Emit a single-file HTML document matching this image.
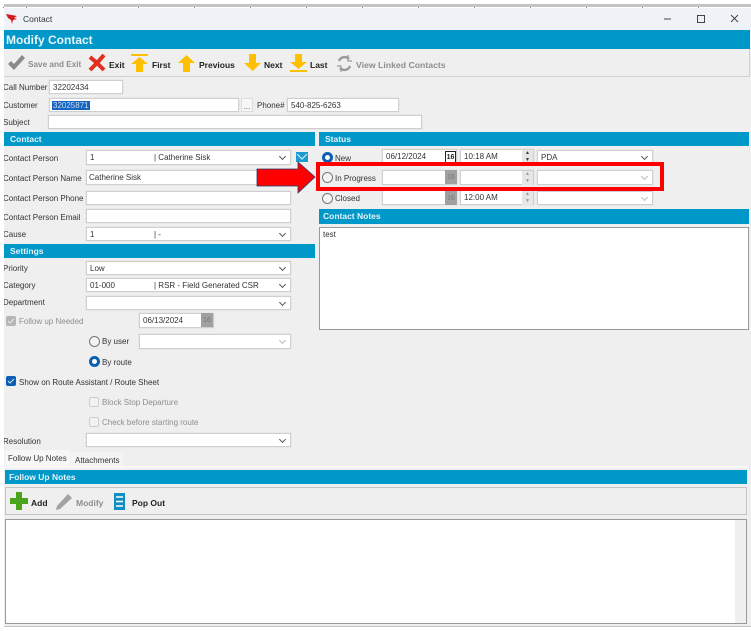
<!DOCTYPE html>
<html><head><meta charset="utf-8"><style>
html,body{margin:0;padding:0}
body{width:751px;height:631px;background:#fff;position:relative;overflow:hidden;font-family:"Liberation Sans",sans-serif;font-size:8px;color:#333}
#w{position:absolute;left:0;top:0;width:751px;height:631px;filter:blur(.35px)}
.a,.i,.s,.h,.t,.b{position:absolute}
.t{white-space:pre;line-height:12px;margin-top:1px}
.h{background:#0098c9;color:#e4f3f8;font-weight:bold;font-size:8.5px;line-height:14px;padding-left:6px;box-sizing:border-box}
.i,.s{background:#fff;border:1px solid #cfcfcf;box-shadow:0 0 0 .5px #e2e2e2;box-sizing:border-box;line-height:14px;padding-left:3px;white-space:pre;color:#333}
.s:after{content:"";position:absolute;right:5px;top:3px;width:4px;height:4px;border-right:1px solid #555;border-bottom:1px solid #555;transform:rotate(45deg)}
.s.d:after{border-color:#bbb}
.s span{position:absolute;left:67px;top:0}
.tb{font-weight:bold;font-size:8.5px;color:#222}
.g{color:#8e8e8e}
.r{position:absolute;width:11px;height:11px;border-radius:50%;box-sizing:border-box;border:1px solid #777;background:#f4f4f4}
.r.on{border:3px solid #0a5fb4;background:#fff}
.c{position:absolute;width:10px;height:10px;border-radius:2px;box-sizing:border-box}
.cal{position:absolute;width:12px;height:15px;background:#a0a0a0;color:#777;font-size:7px;text-align:center;line-height:15px}
.sp{position:absolute;width:11px;height:14px;background:#e6e6e6;color:#999;font-size:5px;line-height:7px;text-align:center}
</style></head><body>
<div id="w">
<div class="a" style="left:4px;top:4px;width:747px;height:3px;background:#c4c4c4"></div>
<div class="a" style="left:0;top:7px;width:751px;height:1px;background-image:repeating-linear-gradient(90deg,#888 0 1px,transparent 1px 56px);background-position:26px 0"></div>
<div class="a" style="left:4px;top:8px;width:747px;height:620px;background:#efefef"></div>
<div class="a" style="left:4px;top:8px;width:747px;height:22px;background:#eff3f8"></div>
<svg class="a" style="left:6px;top:14px" width="12" height="10" viewBox="0 0 12 10"><path d="M0 0L11 2L8 4L11 5L7 6L6 10L5 6L2 4Z" fill="#d21c1c"/></svg>
<div class="t" style="left:23px;top:12px;color:#333;font-size:8.5px">Contact</div>
<svg class="a" style="left:660px;top:12px" width="85" height="14" viewBox="0 0 85 14" fill="none" stroke="#444"><path d="M4 7H11"/><rect x="37.5" y="3.5" width="7" height="7"/><path d="M71 3L78 10M78 3L71 10"/></svg>
<div class="a" style="left:4px;top:30px;width:746px;height:19px;background:#0098c9;color:#e8f5fa;font-weight:bold;font-size:12px;line-height:20px;padding-left:2px;box-sizing:border-box">Modify Contact</div>
<div class="a" style="left:4px;top:49px;width:746px;height:28px;border-bottom:1px solid #d0d0d0;border-right:1px solid #d0d0d0;box-sizing:border-box"></div>
<svg class="a" style="left:7px;top:54px" width="19" height="18" viewBox="0 0 19 18"><path d="M1 10L4 7L7 10L15 1L18 4L7 16Z" fill="#8a8a8a"/></svg>
<div class="t tb g" style="left:28px;top:58px;font-size:8.2px">Save and Exit</div>
<svg class="a" style="left:88px;top:54px" width="18" height="18" viewBox="0 0 18 18"><path d="M2 3L9 9M16 1L9 9M9 9L2 16M9 9L16 16" stroke="#e1301f" stroke-width="4"/></svg>
<div class="t tb" style="left:109px;top:58px">Exit</div>
<svg class="a" style="left:131px;top:54px" width="17" height="18" viewBox="0 0 17 18" fill="#ffc000"><rect width="17" height="2"/><path d="M8.5 3L17 10H12V18H5V10H0Z"/></svg>
<div class="t tb" style="left:152px;top:58px">First</div>
<svg class="a" style="left:178px;top:55px" width="17" height="17" viewBox="0 0 17 17" fill="#ffc000"><path d="M8.5 0L17 8H12V17H5V8H0Z"/></svg>
<div class="t tb" style="left:199px;top:58px">Previous</div>
<svg class="a" style="left:244px;top:54px" width="17" height="17" viewBox="0 0 17 17" fill="#ffc000"><path d="M8.5 17L17 9H12V0H5V9H0Z"/></svg>
<div class="t tb" style="left:264px;top:58px">Next</div>
<svg class="a" style="left:290px;top:54px" width="17" height="18" viewBox="0 0 17 18" fill="#ffc000"><path d="M8.5 15L17 8H12V0H5V8H0Z"/><rect y="16" width="17" height="2"/></svg>
<div class="t tb" style="left:310px;top:58px">Last</div>
<svg class="a" style="left:336px;top:55px" width="17" height="17" viewBox="0 0 17 17" fill="none" stroke="#999" stroke-width="2.4"><path d="M3 6A6 6 0 0 1 13 4M14 11A6 6 0 0 1 4 13"/><path d="M12 0V6H16M5 17V11H1" stroke-width="1.2"/></svg>
<div class="t tb g" style="left:356px;top:58px;font-size:8.7px">View Linked Contacts</div>

<div class="t" style="left:3px;top:81px">Call Number</div>
<div class="i" style="left:49px;top:80px;width:74px;height:14px">32202434</div>
<div class="t" style="left:3px;top:99px">Customer</div>
<div class="i" style="left:49px;top:98px;width:190px;height:14px;padding-left:2px"><span style="background:#1565c0;color:#cde;padding:0 1px">32025871</span></div>
<div class="a" style="left:241px;top:98px;width:12px;height:14px;background:#f7f7f7;border:1px solid #ddd;box-sizing:border-box;text-align:center;line-height:15px;color:#555">...</div>
<div class="t" style="left:257px;top:99px">Phone#</div>
<div class="i" style="left:287px;top:98px;width:112px;height:14px">540-825-6263</div>
<div class="t" style="left:3px;top:116px">Subject</div>
<div class="i" style="left:48px;top:115px;width:374px;height:14px"></div>

<div class="h" style="left:4px;top:132px;width:311px;height:14px">Contact</div>
<div class="h" style="left:319px;top:132px;width:430px;height:14px">Status</div>
<div class="t" style="left:3px;top:152px">Contact Person</div>
<div class="s" style="left:86px;top:150px;width:205px;height:15px">1<span>| Catherine Sisk</span></div>
<svg class="a" style="left:296px;top:152px" width="12" height="10" viewBox="0 0 12 10"><rect width="12" height="10" fill="#1a9ad0"/><path d="M1 2L6 7L11 2" stroke="#e6f5fb" fill="none"/></svg>
<div class="t" style="left:3px;top:172px">Contact Person Name</div>
<div class="i" style="left:86px;top:170px;width:205px;height:15px;padding-left:2px">Catherine Sisk</div>
<div class="t" style="left:3px;top:192px">Contact Person Phone</div>
<div class="i" style="left:86px;top:191px;width:205px;height:14px"></div>
<div class="t" style="left:3px;top:211px">Contact Person Email</div>
<div class="i" style="left:86px;top:209px;width:205px;height:14px"></div>
<div class="t" style="left:3px;top:228px">Cause</div>
<div class="s" style="left:86px;top:227px;width:205px;height:14px">1<span>| -</span></div>

<div class="h" style="left:4px;top:244px;width:311px;height:14px">Settings</div>
<div class="t" style="left:3px;top:262px">Priority</div>
<div class="s" style="left:86px;top:261px;width:205px;height:14px">Low</div>
<div class="t" style="left:3px;top:279px">Category</div>
<div class="s" style="left:86px;top:278px;width:205px;height:14px">01-000<span>| RSR - Field Generated CSR</span></div>
<div class="t" style="left:3px;top:296px">Department</div>
<div class="s" style="left:86px;top:296px;width:205px;height:14px"></div>
<div class="c" style="left:6px;top:316px;background:#b5b5b5"></div>
<svg class="a" style="left:6px;top:316px" width="10" height="10" viewBox="0 0 10 10"><path d="M2 5L4 7L8 3" stroke="#eee" fill="none"/></svg>
<div class="t g" style="left:19px;top:315px">Follow up Needed</div>
<div class="i" style="left:139px;top:313px;width:75px;height:15px">06/13/2024</div>
<div class="cal" style="left:201px;top:313px;height:14px">16</div>
<div class="r" style="left:89px;top:336px"></div>
<div class="t" style="left:102px;top:335px">By user</div>
<div class="s d" style="left:139px;top:334px;width:152px;height:15px"></div>
<div class="r on" style="left:89px;top:356px"></div>
<div class="t" style="left:102px;top:356px">By route</div>
<div class="c" style="left:6px;top:376px;background:#0a5fb4;border:1px solid #0a5fb4"></div>
<svg class="a" style="left:6px;top:376px" width="10" height="10" viewBox="0 0 10 10"><path d="M2 5L4 7L8 3" stroke="#cfe3f7" fill="none"/></svg>
<div class="t" style="left:19px;top:376px">Show on Route Assistant / Route Sheet</div>
<div class="c" style="left:89px;top:397px;background:#f2f2f2;border:1px solid #ccc"></div>
<div class="t g" style="left:102px;top:396px">Block Stop Departure</div>
<div class="c" style="left:89px;top:417px;background:#f2f2f2;border:1px solid #ccc"></div>
<div class="t g" style="left:102px;top:416px">Check before starting route</div>
<div class="t" style="left:3px;top:435px">Resolution</div>
<div class="s" style="left:86px;top:433px;width:205px;height:14px"></div>
<div class="a" style="left:5px;top:450px;width:65px;height:16px;background:#f7f7f7"></div>
<div class="a" style="left:71px;top:452px;width:52px;height:14px;background:#f4f4f4"></div>
<div class="t" style="left:8px;top:452px">Follow Up Notes</div>
<div class="t" style="left:75px;top:454px">Attachments</div>
<div class="a" style="left:4px;top:466px;width:745px;height:2px;background:#f8f8f8"></div>

<div class="h" style="left:319px;top:209px;width:430px;height:15px;padding-left:4px">Contact Notes</div>
<div class="r on" style="left:322px;top:152px"></div>
<div class="t" style="left:335px;top:152px">New</div>
<div class="i" style="left:382px;top:149px;width:75px;height:15px">06/12/2024</div>
<div class="a" style="left:445px;top:151px;width:11px;height:12px;background:#fff;border:1px solid #223;box-sizing:border-box;font-size:7px;line-height:11px;text-align:center;color:#222;font-weight:bold">16</div>
<div class="i" style="left:460px;top:149px;width:74px;height:15px">10:18 AM</div>
<div class="sp" style="left:522px;top:150px;color:#333">▲<br>▼</div>
<div class="s" style="left:537px;top:150px;width:116px;height:14px">PDA</div>
<div class="r" style="left:322px;top:172px"></div>
<div class="t" style="left:335px;top:172px">In Progress</div>
<div class="i" style="left:382px;top:170px;width:75px;height:15px"></div>
<div class="cal" style="left:445px;top:170px;height:14px">16</div>
<div class="i" style="left:460px;top:170px;width:74px;height:15px"></div>
<div class="sp" style="left:522px;top:171px">▲<br>▼</div>
<div class="s d" style="left:537px;top:170px;width:116px;height:15px"></div>
<div class="r" style="left:322px;top:193px"></div>
<div class="t" style="left:335px;top:192px">Closed</div>
<div class="i" style="left:382px;top:190px;width:75px;height:15px"></div>
<div class="cal" style="left:445px;top:191px;height:14px">16</div>
<div class="i" style="left:460px;top:190px;width:74px;height:15px">12:00 AM</div>
<div class="sp" style="left:522px;top:191px">▲<br>▼</div>
<div class="s d" style="left:537px;top:191px;width:116px;height:14px"></div>
<div class="a" style="left:319px;top:227px;width:430px;height:103px;background:#fff;border:1px solid #999;box-sizing:border-box;padding:1px 3px;line-height:11px">test</div>

<div class="h" style="left:5px;top:470px;width:742px;height:14px;padding-left:4px">Follow Up Notes</div>
<div class="a" style="left:5px;top:487px;width:742px;height:28px;border:1px solid #c4c4c4;box-sizing:border-box"></div>
<svg class="a" style="left:10px;top:492px" width="18" height="18" viewBox="0 0 18 18"><path d="M6 0H12V6H18V12H12V18H6V12H0V6H6Z" fill="#4aa41c"/></svg>
<div class="t tb" style="left:31px;top:496px">Add</div>
<svg class="a" style="left:55px;top:493px" width="18" height="18" viewBox="0 0 18 18"><path d="M2 13L13 1L17 5L5 16L1 17Z" fill="#a2a2a2"/></svg>
<div class="t tb g" style="left:76px;top:496px">Modify</div>
<svg class="a" style="left:114px;top:493px" width="11" height="17" viewBox="0 0 11 17"><rect width="11" height="17" fill="#0f8fc4"/><path d="M2 4H9M2 8.500H9M2 13H9" stroke="#fff" stroke-width="1.500"/></svg>
<div class="t tb" style="left:132px;top:496px">Pop Out</div>
<div class="a" style="left:5px;top:519px;width:742px;height:105px;background:#fff;border:1px solid #9a9a9a;box-sizing:border-box"></div>
<div class="a" style="left:735px;top:520px;width:11px;height:103px;background:#efefef"></div>
<div class="a" style="left:0;top:626px;width:751px;height:1px;background:#c4c4c4"></div>
<div class="a" style="left:0;top:627px;width:751px;height:4px;background:#fff"></div>
<div class="a" style="left:0;top:8px;width:4px;height:623px;background:#fff"></div>

<div class="a" style="left:316px;top:162px;width:348px;height:29px;border:4px solid #f00;box-sizing:border-box"></div>
<svg class="a" style="left:256px;top:161px" width="61" height="33" viewBox="0 0 61 33"><path d="M1 8H42V1L59 16L42 32V25H1Z" fill="#f00" stroke="#2a3a6a" stroke-width=".8"/></svg>
</div>
</body></html>
